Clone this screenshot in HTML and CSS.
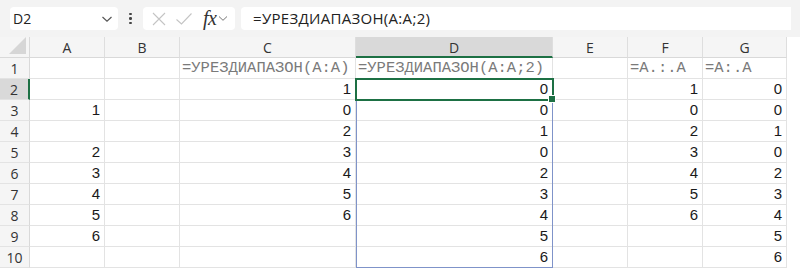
FILE: index.html
```html
<!DOCTYPE html>
<html lang="ru">
<head>
<meta charset="utf-8">
<link rel="stylesheet" href="styles.css">
</head>
<body>
<div class="toolbar">
  <div class="namebox"><span class="ref">D2</span>
    <svg class="chev" width="12" height="8" viewBox="0 0 12 8"><path d="M1.5 2 L6 6.2 L10.5 2" fill="none" stroke="#555" stroke-width="1.2"/></svg>
  </div>
  <div class="dots"><span></span><span></span><span></span></div>
  <div class="fxbox">
    <svg width="16" height="16" viewBox="0 0 16 16"><path d="M2 2 L14 14 M14 2 L2 14" stroke="#c4c4c4" stroke-width="1.1" fill="none"/></svg>
    <svg width="18" height="16" viewBox="0 0 18 16"><path d="M1.5 8.5 L6.5 13 L16.5 2.5" stroke="#c4c4c4" stroke-width="1.1" fill="none"/></svg>
    <span class="fx">fx</span>
    <svg class="chev small" width="10" height="7" viewBox="0 0 10 7"><path d="M1 1.5 L5 5.3 L9 1.5" fill="none" stroke="#777" stroke-width="1"/></svg>
  </div>
  <div class="formula">=УРЕЗДИАПАЗОН(A:A;2)</div>
</div>
<div class="sheet">
  <div class="grid" id="grid"></div>
  <div class="spill"></div>
  <div class="sel"><span class="handle"></span></div>
</div>
<script>
const cols = ['A','B','C','D','E','F','G',''];
const data = {
  1: {C:['=УРЕЗДИАПАЗОН(A:A)','f'], D:['=УРЕЗДИАПАЗОН(A:A;2)','f'], F:['=A.:.A','f'], G:['=A:.A','f']},
  2: {C:1, D:0, F:1, G:0},
  3: {A:1, C:0, D:0, F:0, G:0},
  4: {C:2, D:1, F:2, G:1},
  5: {A:2, C:3, D:0, F:3, G:0},
  6: {A:3, C:4, D:2, F:4, G:2},
  7: {A:4, C:5, D:3, F:5, G:3},
  8: {A:5, C:6, D:4, F:6, G:4},
  9: {A:6, D:5, G:5},
  10:{D:6, G:6}
};
const g = document.getElementById('grid');
function el(cls, txt){const d=document.createElement('div');d.className=cls;if(txt!==undefined)d.textContent=txt;g.appendChild(d);return d;}
el('corner').innerHTML='<span class="tri"></span>';
cols.forEach(c=>el('colhead'+(c==='D'?' active':'')+(c===''?' blank':''),c));
for(let r=1;r<=10;r++){
  el('rowhead'+(r===2?' active':''), r);
  cols.forEach(c=>{
    const v = data[r][c];
    if(c===''){el('cell blank');return;}
    if(Array.isArray(v)) el('cell text', v[0]);
    else el('cell num', v===undefined?'':v);
  });
}
</script>
</body>
</html>
```
FILE: styles.css
```css
html, body { margin: 0; padding: 0; background: #ffffff; }
body { width: 800px; height: 273px; overflow: hidden; font-family: "Liberation Sans", Arial, sans-serif; }

.toolbar {
  height: 37px;
  background: #f3f3f3;
  display: flex;
  align-items: flex-start;
  padding-top: 7px;
  box-sizing: border-box;
}
.namebox {
  margin-left: 10px;
  width: 108px;
  height: 23px;
  background: #fff;
  border-radius: 4px;
  display: flex;
  align-items: center;
  justify-content: space-between;
  padding: 0 5px 0 3px;
  box-sizing: border-box;
  font-family: "Open Sans", sans-serif;
  font-size: 14px;
  color: #222;
}
.dots {
  width: 25px;
  height: 23px;
  display: flex;
  flex-direction: column;
  align-items: center;
  justify-content: center;
  gap: 2px;
}
.dots span { width: 2.5px; height: 2.5px; background: #444; border-radius: 50%; }
.fxbox {
  width: 92px;
  height: 23px;
  background: #fff;
  border-radius: 4px;
  display: flex;
  align-items: center;
  gap: 8px;
  padding-left: 8px;
  box-sizing: border-box;
}
.fxbox .fx {
  font-family: "Liberation Serif", serif;
  font-style: italic;
  font-size: 20px;
  color: #333;
  line-height: 23px;
  margin-left: 2px;
  letter-spacing: -0.5px;
}
.fxbox .chev.small { margin-left: -6px; }
.formula {
  margin-left: 6px;
  width: 550px;
  height: 23px;
  background: #fff;
  border-radius: 4px 0 0 4px;
  padding-left: 12px;
  box-sizing: border-box;
  font-family: "Open Sans", sans-serif;
  font-size: 15px;
  letter-spacing: 0.3px;
  line-height: 23px;
  color: #222;
}

.sheet { position: relative; }
.grid {
  display: grid;
  grid-template-columns: 30px 75px 75px 176px 197px 75px 75px 84px 13px;
  grid-template-rows: repeat(11, 21px);
}
.corner, .colhead, .rowhead {
  background: #f5f5f5;
  color: #333;
  font-family: "Open Sans", sans-serif;
  font-size: 14px;
  display: flex;
  align-items: center;
  justify-content: center;
  box-sizing: border-box;
}
.corner { border-right: 1px solid #d9d9d9; border-bottom: 1px solid #d9d9d9; position: relative; }
.corner .tri {
  position: absolute;
  right: 3px; bottom: 3px;
  width: 0; height: 0;
  border-left: 17px solid transparent;
  border-bottom: 17px solid #d6d6d6;
}
.colhead { border-right: 1px solid #dedede; border-bottom: 1px solid #d9d9d9; padding-top: 1px; }
.colhead.active { background: #d9d9d9; border-bottom: 2px solid #1d7044; }
.colhead.blank { background: #fff; border-right: none; border-bottom: none; }
.rowhead { border-right: 1px solid #d9d9d9; border-bottom: 1px solid #e3e3e3; }
.rowhead.active { background: #d9d9d9; border-right: 2px solid #1d7044; }

.cell {
  border-right: 1px solid #e3e3e3;
  border-bottom: 1px solid #e3e3e3;
  box-sizing: border-box;
  font-size: 15px;
  line-height: 20px;
  color: #1a1a1a;
  white-space: nowrap;
  overflow: visible;
}
.cell.num { text-align: right; padding-right: 4px; font-family: "Liberation Sans", Arial, sans-serif; }
.cell.text {
  font-family: "Liberation Mono", monospace;
  font-size: 15.5px;
  color: #7a7a7a;
  padding-left: 2px;
  text-align: left;
}
.cell.blank { border: none; }

.spill {
  position: absolute;
  left: 356px; top: 42px;
  width: 197px; height: 189px;
  border: 1px solid #7f93c9;
  box-sizing: border-box;
}
.sel {
  position: absolute;
  left: 355px; top: 41px;
  width: 199px; height: 23px;
  border: 2px solid #1d7044;
  box-sizing: border-box;
}
.sel .handle {
  position: absolute;
  right: -4px; bottom: -4px;
  width: 6px; height: 6px;
  background: #1d7044;
  border: 1px solid #fff;
}
```
